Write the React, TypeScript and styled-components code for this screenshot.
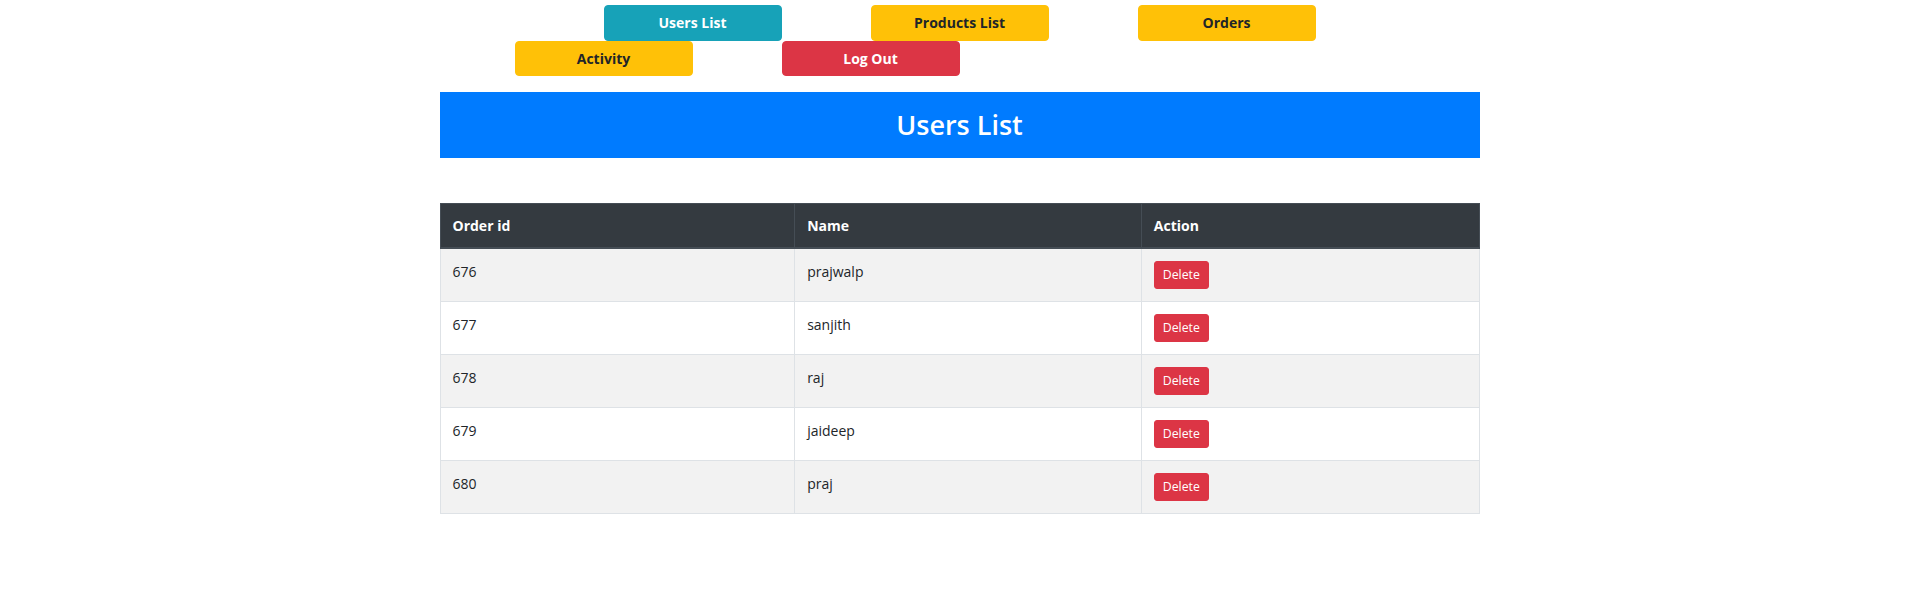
import styled, { createGlobalStyle } from "styled-components";

const GlobalStyle = createGlobalStyle`
	* {
		box-sizing: border-box;
	}
	body {
		margin: 0;
		background: #ffffff;
		color: #212529;
		font-family: "Segoe UI", "Open Sans", "Noto Sans", sans-serif;
		font-size: 14px;
		line-height: 1.5;
	}
`;

const Page = styled.div`
	padding-top: 5px;
`;

const Nav = styled.nav`
	display: flex;
	flex-direction: column;
`;

const NavRow = styled.div<{ $indent?: number }>`
	width: 1040px;
	margin: 0 auto;
	display: flex;
	justify-content: ${(p) => (p.$indent === undefined ? "center" : "flex-start")};
	padding-left: ${(p) => p.$indent ?? 0}px;
	gap: 89px;
`;

const colors: Record<string, { bg: string; fg: string }> = {
	info: { bg: "#17a2b8", fg: "#ffffff" },
	warning: { bg: "#ffc107", fg: "#212529" },
	danger: { bg: "#dc3545", fg: "#ffffff" },
};

const NavButton = styled.button<{ $variant: string }>`
	width: 178px;
	height: 35.5px;
	border: 1px solid ${(p) => colors[p.$variant].bg};
	border-radius: 4px;
	background: ${(p) => colors[p.$variant].bg};
	color: ${(p) => colors[p.$variant].fg};
	font-family: inherit;
	font-size: 14px;
	font-weight: 700;
	line-height: 1.5;
	padding: 6px 12px;
	cursor: pointer;
`;

const Main = styled.main`
	width: 1040px;
	margin: 16px auto 0;
`;

const Heading = styled.h2`
	margin: 0;
	height: 66px;
	display: flex;
	align-items: center;
	justify-content: center;
	background: #007bff;
	color: #ffffff;
	font-size: 27px;
	font-weight: 600;
	line-height: 1.2;
`;

const Table = styled.table`
	width: 100%;
	margin-top: 45px;
	border-collapse: collapse;
	border: 1px solid #dee2e6;
`;

const Th = styled.th<{ $w: number }>`
	width: ${(p) => p.$w}px;
	background: #343a40;
	color: #ffffff;
	text-align: left;
	font-weight: 700;
	padding: 11px 12px;
	border: 1px solid #454d55;
	border-bottom-width: 2px;
	vertical-align: bottom;
`;

const Tr = styled.tr<{ $striped: boolean }>`
	background: ${(p) => (p.$striped ? "#f2f2f2" : "#ffffff")};
`;

const Td = styled.td`
	padding: 12px;
	border: 1px solid #dee2e6;
	vertical-align: top;
	height: 53px;
`;

const DeleteButton = styled.button`
	height: 28px;
	padding: 4px 8px;
	border: 1px solid #dc3545;
	border-radius: 3px;
	background: #dc3545;
	color: #ffffff;
	font-family: inherit;
	font-size: 12.25px;
	line-height: 1.5;
	cursor: pointer;
`;

const users = [
	{ id: 676, name: "prajwalp" },
	{ id: 677, name: "sanjith" },
	{ id: 678, name: "raj" },
	{ id: 679, name: "jaideep" },
	{ id: 680, name: "praj" },
];

function App() {
	return (
		<Page>
			<GlobalStyle />
			<Nav>
				<NavRow>
					<NavButton $variant="info">Users List</NavButton>
					<NavButton $variant="warning">Products List</NavButton>
					<NavButton $variant="warning">Orders</NavButton>
				</NavRow>
				<NavRow $indent={75}>
					<NavButton $variant="warning">Activity</NavButton>
					<NavButton $variant="danger">Log Out</NavButton>
				</NavRow>
			</Nav>
			<Main>
				<Heading>Users List</Heading>
				<Table>
					<thead>
						<tr>
							<Th $w={355}>Order id</Th>
							<Th $w={347}>Name</Th>
							<Th $w={338}>Action</Th>
						</tr>
					</thead>
					<tbody>
						{users.map((u, i) => (
							<Tr key={u.id} $striped={i % 2 === 0}>
								<Td>{u.id}</Td>
								<Td>{u.name}</Td>
								<Td>
									<DeleteButton>Delete</DeleteButton>
								</Td>
							</Tr>
						))}
					</tbody>
				</Table>
			</Main>
		</Page>
	);
}

export default App;
